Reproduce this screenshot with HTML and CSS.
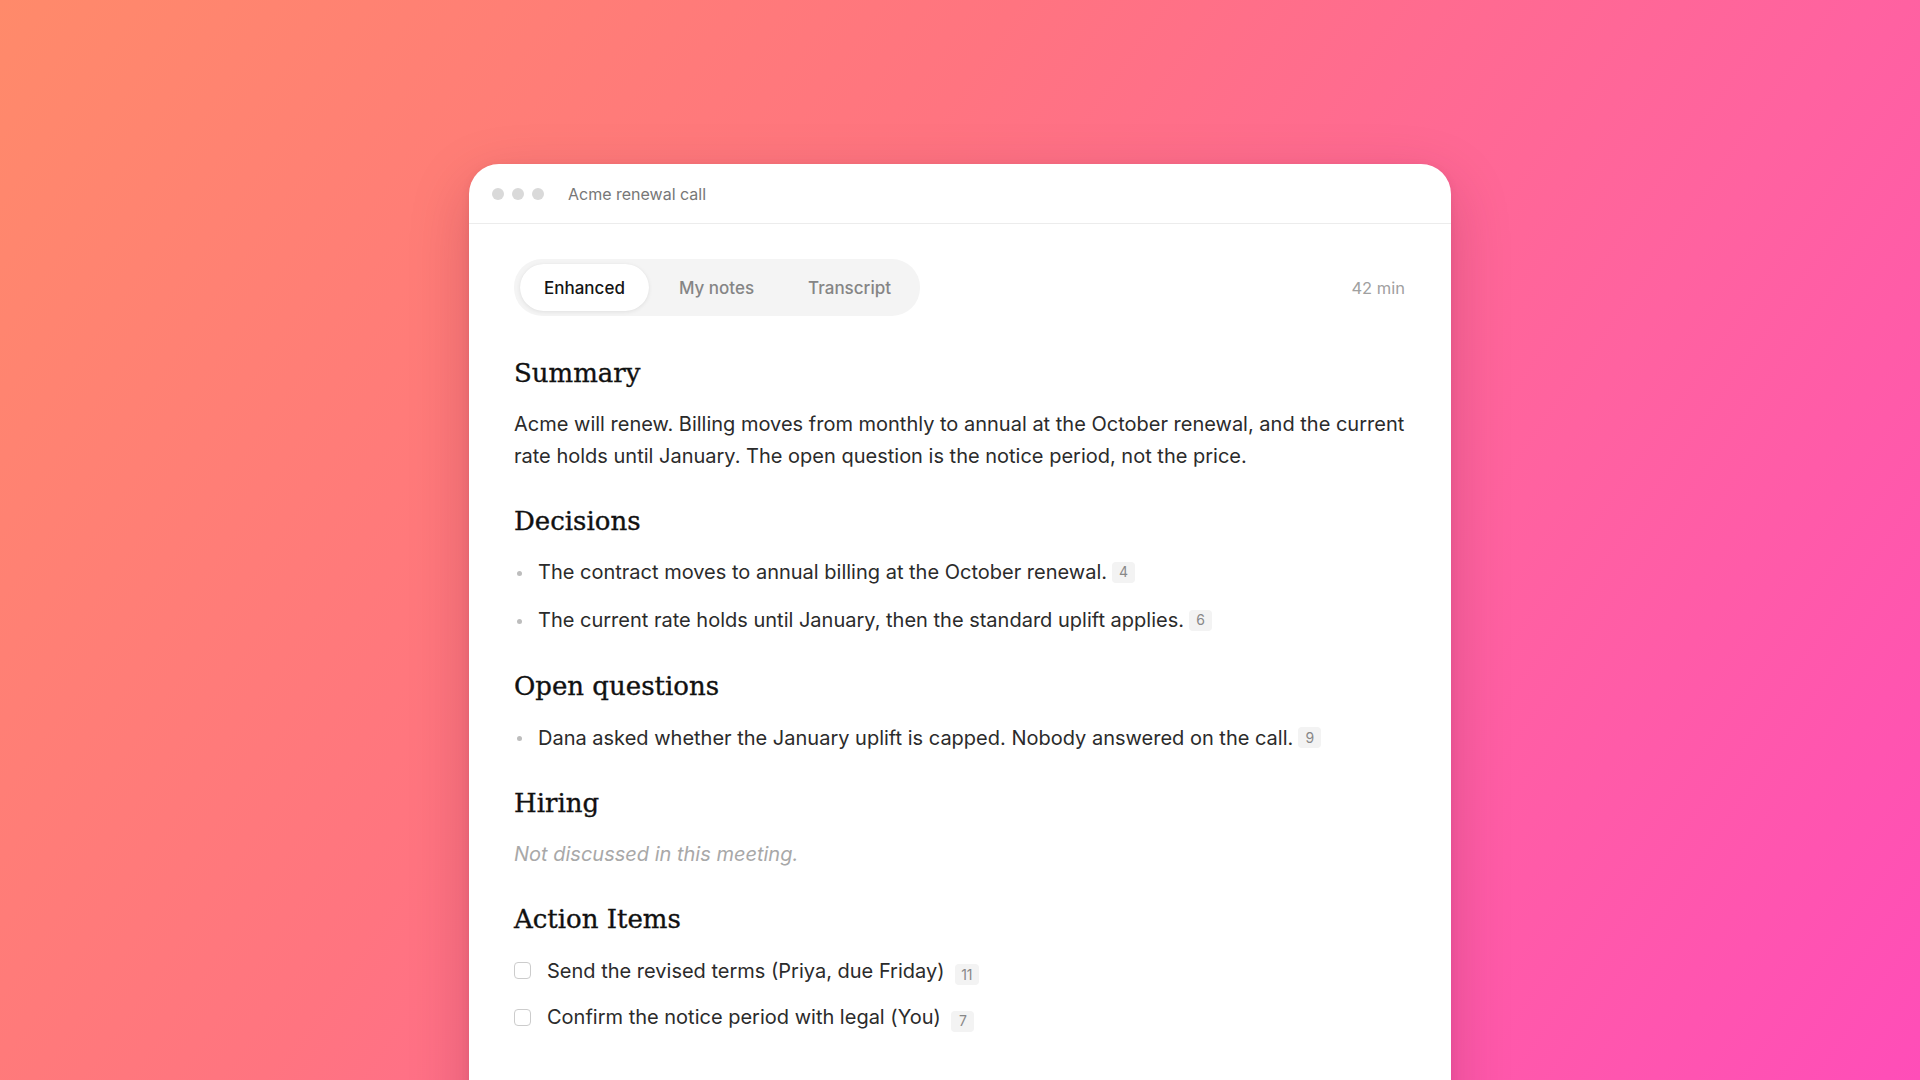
FILE: index.html
```html
<!DOCTYPE html>
<html lang="en">
<head>
<meta charset="utf-8">
<title>Acme renewal call</title>
<link rel="stylesheet" href="styles.css">
</head>
<body>
<main class="stage">
  <section class="window">
    <header class="titlebar">
      <div class="dots"><span class="dot"></span><span class="dot"></span><span class="dot"></span></div>
      <div class="title">Acme renewal call</div>
    </header>
    <div class="content">
      <div class="toolbar">
        <nav class="tabs">
          <span class="tab active">Enhanced</span>
          <span class="tab">My notes</span>
          <span class="tab">Transcript</span>
        </nav>
        <span class="duration">42 min</span>
      </div>

      <div class="section first">
        <h2 class="heading">Summary</h2>
        <p class="para">Acme will renew. Billing moves from monthly to annual at the October renewal, and the current rate holds until January. The open question is the notice period, not the price.</p>
      </div>

      <div class="section">
        <h2 class="heading">Decisions</h2>
        <ul class="bullets">
          <li class="bullet">The contract moves to annual billing at the October renewal. <span class="ref">4</span></li>
          <li class="bullet">The current rate holds until January, then the standard uplift applies. <span class="ref">6</span></li>
        </ul>
      </div>

      <div class="section after-list">
        <h2 class="heading">Open questions</h2>
        <ul class="bullets">
          <li class="bullet">Dana asked whether the January uplift is capped. Nobody answered on the call. <span class="ref">9</span></li>
        </ul>
      </div>

      <div class="section">
        <h2 class="heading">Hiring</h2>
        <p class="para empty">Not discussed in this meeting.</p>
      </div>

      <div class="section">
        <h2 class="heading">Action Items</h2>
        <ul class="tasks">
          <li class="task"><span class="check"></span><span class="task-text">Send the revised terms (Priya, due Friday) <span class="ref">11</span></span></li>
          <li class="task"><span class="check"></span><span class="task-text">Confirm the notice period with legal (You) <span class="ref">7</span></span></li>
        </ul>
      </div>
    </div>
  </section>
</main>
</body>
</html>
```

FILE: styles.css
```css
* { box-sizing: border-box; }

html, body {
  margin: 0;
  padding: 0;
  height: 100%;
}

body {
  overflow: hidden;
  font-family: Inter, "Noto Sans", "Liberation Sans", sans-serif;
  background: linear-gradient(125deg, #ff8a6a 0%, #ff7480 38%, #ff62a0 70%, #ff4db8 100%);
}

.stage {
  height: 100vh;
  display: flex;
  justify-content: center;
  padding-top: 164px;
}

.window {
  width: 982px;
  height: 1000px;
  background: #ffffff;
  border-radius: 30px 30px 0 0;
  box-shadow: 0 20px 60px rgba(90, 20, 50, 0.22), 0 2px 8px rgba(90, 20, 50, 0.08);
  display: flex;
  flex-direction: column;
}

.titlebar {
  height: 60px;
  display: flex;
  align-items: center;
  padding: 0 23px;
  border-bottom: 1px solid #ececec;
  flex-shrink: 0;
}

.dots {
  display: flex;
  gap: 8px;
}

.dot {
  width: 12px;
  height: 12px;
  border-radius: 50%;
  background: #d9d9d9;
}

.title {
  margin-left: 24px;
  font-size: 16px;
  color: #777777;
}

.content {
  padding: 35px 44px 0 45px;
}

.toolbar {
  display: flex;
  align-items: center;
  justify-content: space-between;
  padding-right: 2px;
}

.tabs {
  display: flex;
  gap: 6px;
  padding: 5px 5px 5px 6px;
  background: #f4f4f4;
  border-radius: 28px;
}

.tab {
  height: 47px;
  display: flex;
  align-items: center;
  padding: 0 24px;
  font-size: 17px;
  font-weight: 500;
  color: #858585;
  border-radius: 999px;
}

.tab.active {
  background: #ffffff;
  color: #141414;
  box-shadow: 0 1px 4px rgba(0, 0, 0, 0.08), 0 0 1px rgba(0, 0, 0, 0.06);
}

.duration {
  font-size: 16.5px;
  color: #a0a0a0;
}

.section {
  margin-top: 33px;
}

.section.after-list {
  margin-top: 34px;
}

.section.first {
  margin-top: 41px;
}

.heading {
  margin: 0 0 19.5px;
  font-family: "DejaVu Serif", "Liberation Serif", serif;
  font-size: 26px;
  line-height: 32px;
  font-weight: 400;
  color: #111111;
  letter-spacing: 0;
  -webkit-text-stroke: 0.35px #111111;
}

.section.first .heading {
  margin-bottom: 18.5px;
}

.para {
  margin: 0;
  font-size: 20px;
  line-height: 32px;
  color: #2b2b2b;
}

.para.empty {
  font-style: italic;
  color: #a8a8a8;
}

.bullets, .tasks {
  list-style: none;
  margin: 0;
  padding: 0;
  display: flex;
  flex-direction: column;
}

.bullets { gap: 16px; }
.tasks { gap: 14.5px; }

.bullet {
  display: flex;
  align-items: center;
  font-size: 20px;
  line-height: 32px;
  color: #2b2b2b;
}

.bullet::before {
  content: "";
  width: 5px;
  height: 5px;
  border-radius: 50%;
  background: #bdbdbd;
  margin: 2px 16px 0 3px;
  flex-shrink: 0;
}

.ref {
  display: inline-flex;
  align-items: center;
  justify-content: center;
  min-width: 23px;
  height: 21px;
  padding: 0 6px;
  margin-left: 5px;
  border-radius: 4px;
  background: #f3f3f3;
  font-size: 14px;
  color: #888888;
  vertical-align: -2px;
  line-height: 1;
}

.task {
  display: flex;
  align-items: center;
  font-size: 20px;
  line-height: 32px;
  color: #2b2b2b;
}

.task-text {
  line-height: 32px;
}

.check {
  width: 17px;
  height: 17px;
  border: 1.5px solid #cccccc;
  border-radius: 4px;
  margin-right: 16px;
  flex-shrink: 0;
  background: #fff;
}
```
